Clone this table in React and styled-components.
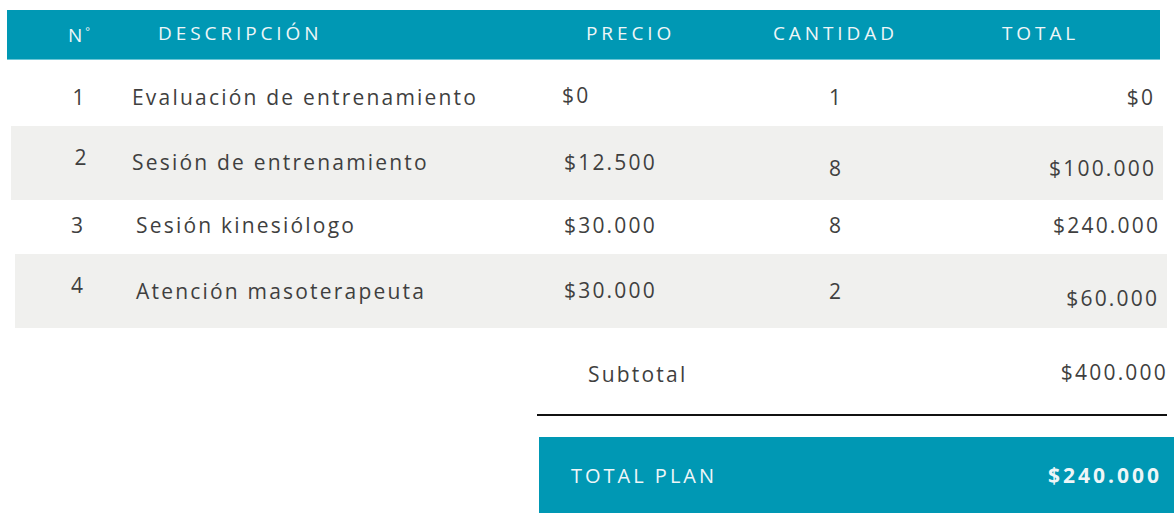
import React from "react";
import styled, { createGlobalStyle } from "styled-components";

const TEAL = "#0098b4";
const INK = "#3f3f3f";
const GREY = "#f0f0ee";

const Global = createGlobalStyle`
  html, body { margin: 0; padding: 0; background: #fff; }
  body { font-family: "Open Sans", "Liberation Sans", sans-serif; color: ${INK}; }
`;

const Page = styled.div`
  width: 1174px;
  padding-top: 10px;
`;

const HeaderBar = styled.div`
  margin-left: 7px;
  width: 1153px;
  height: 50px;
  box-sizing: border-box;
  background: ${TEAL};
  border-bottom: 1px solid #6cc6d6;
  display: grid;
  grid-template-columns: 90px 428px 187px 229px 1fr;
  align-items: center;
  padding: 0 0 4px 61px;
`;

const HeadCell = styled.div`
  color: #eef6f8;
  font-size: 19px;
  letter-spacing: 3.9px;
  line-height: 24px;
  white-space: nowrap;
`;

const Sup = styled.span`
  font-size: 11px;
  vertical-align: 7px;
  margin-left: -1px;
`;

const Row = styled.div`
  display: grid;
  grid-template-columns: 120px 440px 200px 150px 1fr;
  align-items: start;
  height: ${(p) => p.$h}px;
  background: ${(p) =>
    p.$shade ? `linear-gradient(${GREY}, ${GREY}) no-repeat` : "none"};
  background-position: ${(p) => p.$left}px 0;
  background-size: calc(100% - ${(p) => p.$left + p.$right}px) 100%;
  font-size: 21px;
  line-height: 24px;
  letter-spacing: 2.2px;
`;

const Num = styled.div`
  margin-top: ${(p) => p.$dy}px;
  padding-left: ${(p) => 38 + (p.$dx || 0)}px;
  text-align: center;
  letter-spacing: 0;
`;

const Desc = styled.div`
  margin-top: ${(p) => p.$dy}px;
  padding-left: ${(p) => 12 + (p.$dx || 0)}px;
  white-space: nowrap;
`;

const Price = styled.div`
  margin-top: ${(p) => p.$dy}px;
  padding-left: ${(p) => 2 + (p.$dx || 0)}px;
  white-space: nowrap;
`;

const Qty = styled.div`
  margin-top: ${(p) => p.$dy}px;
  text-align: center;
  letter-spacing: 0;
`;

const Amount = styled.div`
  margin-top: ${(p) => p.$dy}px;
  padding-right: ${(p) => p.$pr}px;
  text-align: right;
  white-space: nowrap;
`;

const Summary = styled.div`
  margin-left: 537px;
  width: 637px;
`;

const SubtotalRow = styled.div`
  width: 631px;
  height: 86px;
  box-sizing: border-box;
  padding: 34px 0 0 51px;
  display: flex;
  justify-content: space-between;
  align-items: flex-start;
  font-size: 21px;
  line-height: 24px;
  letter-spacing: 2.2px;
`;

const SubAmount = styled.span`
  margin-top: -2px;
`;

const Divider = styled.div`
  width: 630px;
  height: 2px;
  background: #111;
`;

const TotalBar = styled.div`
  margin-top: 21px;
  margin-left: 2px;
  height: 76px;
  background: ${TEAL};
  color: #eef6f8;
  display: flex;
  align-items: center;
  justify-content: space-between;
  padding: 0 12px 0 32px;
  font-size: 20px;
  letter-spacing: 3px;
`;

const TotalValue = styled.span`
  font-size: 21px;
  font-weight: 700;
  letter-spacing: 3px;
`;

const rows = [
  {
    n: "1", desc: "Evaluación de entrenamiento", price: "$0", qty: "1", total: "$0",
    h: 66, shade: false, left: 0, right: 0,
    dy: [25, 25, 23, 25, 25], ddx: 0, ndx: -1, pdx: 0, pr: 18.8,
  },
  {
    n: "2", desc: "Sesión de entrenamiento", price: "$12.500", qty: "8", total: "$100.000",
    h: 74, shade: true, left: 11, right: 11,
    dy: [19, 24, 24, 30, 30], ddx: 0, ndx: 3, pdx: 2, pr: 17.8,
  },
  {
    n: "3", desc: "Sesión kinesiólogo", price: "$30.000", qty: "8", total: "$240.000",
    h: 54, shade: false, left: 0, right: 0,
    dy: [13, 13, 13, 13, 13], ddx: 4, ndx: -4, pdx: 2, pr: 13.8,
  },
  {
    n: "4", desc: "Atención masoterapeuta", price: "$30.000", qty: "2", total: "$60.000",
    h: 74, shade: true, left: 15, right: 7,
    dy: [19, 25, 24, 25, 32], ddx: 4, ndx: -4, pdx: 2, pr: 14.8,
  },
];

export default function App() {
  return (
    <Page>
      <Global />
      <HeaderBar>
        <HeadCell>
          N<Sup>°</Sup>
        </HeadCell>
        <HeadCell>DESCRIPCIÓN</HeadCell>
        <HeadCell>PRECIO</HeadCell>
        <HeadCell>CANTIDAD</HeadCell>
        <HeadCell>TOTAL</HeadCell>
      </HeaderBar>
      {rows.map((r) => (
        <Row key={r.n} $h={r.h} $shade={r.shade} $left={r.left} $right={r.right}>
          <Num $dy={r.dy[0]} $dx={r.ndx}>{r.n}</Num>
          <Desc $dy={r.dy[1]} $dx={r.ddx}>{r.desc}</Desc>
          <Price $dy={r.dy[2]} $dx={r.pdx}>{r.price}</Price>
          <Qty $dy={r.dy[3]}>{r.qty}</Qty>
          <Amount $dy={r.dy[4]} $pr={r.pr}>{r.total}</Amount>
        </Row>
      ))}
      <Summary>
        <SubtotalRow>
          <span>Subtotal</span>
          <SubAmount>$400.000</SubAmount>
        </SubtotalRow>
        <Divider />
        <TotalBar>
          <span>TOTAL PLAN</span>
          <TotalValue>$240.000</TotalValue>
        </TotalBar>
      </Summary>
    </Page>
  );
}
